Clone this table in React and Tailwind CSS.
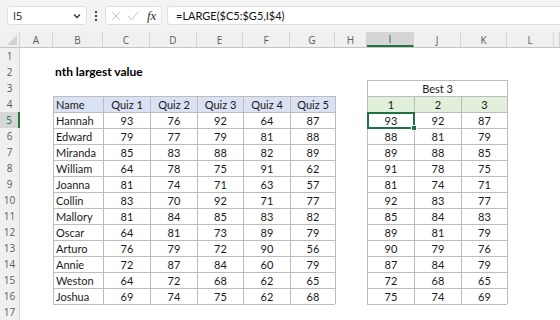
import React from "react";

const W = [20, 33, 50, 47, 47, 46, 47, 45, 32, 47, 47, 46, 47, 6];
const LETTERS = ["", "A", "B", "C", "D", "E", "F", "G", "H", "I", "J", "K", "L", ""];

const DATA = [
  ["Hannah", 93, 76, 92, 64, 87, 93, 92, 87],
  ["Edward", 79, 77, 79, 81, 88, 88, 81, 79],
  ["Miranda", 85, 83, 88, 82, 89, 89, 88, 85],
  ["William", 64, 78, 75, 91, 62, 91, 78, 75],
  ["Joanna", 81, 74, 71, 63, 57, 81, 74, 71],
  ["Collin", 83, 70, 92, 71, 77, 92, 83, 77],
  ["Mallory", 81, 84, 85, 83, 82, 85, 84, 83],
  ["Oscar", 64, 81, 73, 89, 79, 89, 81, 79],
  ["Arturo", 76, 79, 72, 90, 56, 90, 79, 76],
  ["Annie", 72, 87, 84, 60, 79, 87, 84, 79],
  ["Weston", 64, 72, 68, 62, 65, 72, 68, 65],
  ["Joshua", 69, 74, 75, 62, 68, 75, 74, 69],
];

function cellContent(row, col) {
  if (row === 2 && col === 2) return { text: "nth largest value", bold: true, left: true, overflow: true };
  if (row === 4) {
    if (col === 2) return { text: "Name", left: true, fill: "blue" };
    if (col >= 3 && col <= 7) return { text: "Quiz " + (col - 2), fill: "blue" };
    if (col >= 9 && col <= 11) return { text: String(col - 8), fill: "green" };
  }
  if (row >= 5 && row <= 16) {
    const d = DATA[row - 5];
    if (col === 2) return { text: d[0], left: true };
    if (col >= 3 && col <= 7) return { text: String(d[col - 2]) };
    if (col >= 9 && col <= 11) return { text: String(d[col - 3]) };
  }
  return null;
}

function inT1(row, col) {
  return row >= 4 && row <= 16 && col >= 2 && col <= 7;
}
function inT2(row, col) {
  return row >= 4 && row <= 16 && col >= 9 && col <= 11;
}

function Cell({ row, col }) {
  const c = cellContent(row, col);
  const inTable = inT1(row, col) || inT2(row, col);
  const topB =
    inTable ||
    (row === 17 && ((col >= 2 && col <= 7) || (col >= 9 && col <= 11)));
  const leftB =
    inTable || (row >= 4 && row <= 16 && (col === 8 || col === 12));
  const active = row === 5 && col === 9;
  let bg = "bg-white";
  if (c && c.fill === "blue") bg = "bg-[#d9e1f2]";
  if (c && c.fill === "green") bg = "bg-[#e2efda]";
  return (
    <div
      className={`relative h-[16px] shrink-0 flex items-center text-[11px] leading-none text-[#1a1a1a] ${bg} ${
        topB ? "border-t border-[#bdbdbd]" : ""
      } ${leftB ? "border-l border-l-[#bdbdbd]" : ""} ${
        c && c.left ? "justify-start pl-[2px]" : "justify-center"
      } ${(c && c.overflow) || active ? "overflow-visible whitespace-nowrap z-10" : "overflow-hidden"}`}
      style={{ width: W[col] }}
    >
      {c && (
        <span className={`${c.bold ? "font-bold text-[12px] text-black" : ""} whitespace-nowrap`}>
          {c.text}
        </span>
      )}
      {active && (
        <>
          <div className="absolute left-[-1px] top-[-1px] w-[48px] h-[17px] border-2 border-[#217346] pointer-events-none" />
          <div className="absolute left-[43px] top-[12px] w-[6px] h-[6px] bg-[#217346] border border-white" />
        </>
      )}
    </div>
  );
}

function Row({ row }) {
  const sel = row === 5;
  if (row === 3) {
    return (
      <div className="flex h-[16px]">
        <RowHeader row={row} sel={false} />
        {[1, 2, 3, 4, 5, 6, 7, 8].map((c) => (
          <div key={c} className="h-[16px] shrink-0 bg-white" style={{ width: W[c] }} />
        ))}
        <div className="h-[16px] w-[140px] shrink-0 bg-white border-t border-l border-[#bdbdbd] flex items-center justify-center text-[11px] leading-none text-[#1a1a1a]">
          Best 3
        </div>
        <div className="h-[16px] w-[47px] shrink-0 bg-white border-l border-[#bdbdbd]" />
        <div className="h-[16px] w-[6px] shrink-0 bg-white" />
      </div>
    );
  }
  return (
    <div className="flex h-[16px]">
      <RowHeader row={row} sel={sel} />
      {[1, 2, 3, 4, 5, 6, 7, 8, 9, 10, 11, 12, 13].map((c) => (
        <Cell key={c} row={row} col={c} />
      ))}
    </div>
  );
}

function RowHeader({ row, sel }) {
  return (
    <div
      className={`w-[20px] h-[16px] shrink-0 flex items-center justify-center text-[10px] leading-none font-['Open_Sans',sans-serif] ${
        sel
          ? "bg-[#d6d6d6] text-[#217346] border-r-2 border-[#217346]"
          : "bg-[#f0f0f0] text-[#5c5c5c] border-r border-[#d4d4d4]"
      }`}
    >
      {row}
    </div>
  );
}

function ColHeaders() {
  return (
    <div className="flex h-[16px] bg-[#f0f0f0] border-b border-[#c4c4c4] font-['Open_Sans',sans-serif]">
      <div className="relative w-[20px] h-full shrink-0 border-r border-[#d4d4d4]">
        <svg className="absolute right-[2px] bottom-[2px]" width="10" height="10" viewBox="0 0 10 10">
          <polygon points="10,0 10,10 0,10" fill="#d3d3d3" />
        </svg>
      </div>
      {LETTERS.slice(1).map((l, i) => {
        const col = i + 1;
        const sel = l === "I";
        return (
          <div
            key={col}
            className={`h-full shrink-0 flex items-center justify-center text-[10px] leading-none ${
              sel
                ? "bg-[#d6d6d6] text-[#217346] border-b-2 border-b-[#217346] border-r border-r-[#d4d4d4]"
                : "text-[#5c5c5c] border-r border-[#d4d4d4]"
            }`}
            style={{ width: W[col] }}
          >
            {l}
          </div>
        );
      })}
    </div>
  );
}

function Toolbar() {
  return (
    <div className="h-[32px] bg-[#f3f3f3] flex items-start pt-[6px] pl-[7px] font-['Open_Sans',sans-serif]">
      <div className="w-[80px] h-[19px] bg-white border border-[#e0e0e0] rounded-[3px] flex items-center justify-between pl-[5px] pr-[5px] text-[11px] text-[#222]">
        <span className="leading-none">I5</span>
        <svg width="8" height="6" viewBox="0 0 8 6">
          <path d="M1 1.5 L4 4.5 L7 1.5" fill="none" stroke="#333" strokeWidth="1.3" />
        </svg>
      </div>
      <div className="w-[18px] h-[19px] flex flex-col items-center justify-center gap-[2px]">
        <div className="w-[2px] h-[2px] bg-[#444]" />
        <div className="w-[2px] h-[2px] bg-[#444]" />
        <div className="w-[2px] h-[2px] bg-[#444]" />
      </div>
      <div className="w-[57px] h-[19px] bg-white border border-[#e0e0e0] rounded-[3px] flex items-center pl-[5px] gap-[6px]">
        <svg width="10" height="10" viewBox="0 0 10 10">
          <path d="M1 1 L9 9 M9 1 L1 9" stroke="#c4c4c4" strokeWidth="1" fill="none" />
        </svg>
        <svg width="12" height="10" viewBox="0 0 12 10">
          <path d="M1 5 L4.5 9 L11 1" stroke="#c4c4c4" strokeWidth="1" fill="none" />
        </svg>
        <span className="font-['Liberation_Serif',serif] italic text-[13px] leading-none text-[#333] ml-[2px]">
          fx
        </span>
      </div>
      <div className="flex-1 ml-[5px] h-[19px] bg-white border border-[#e0e0e0] border-r-0 rounded-l-[3px] flex items-center pl-[8px] text-[11px] text-[#111] font-['Lato',sans-serif]">
        <span className="leading-none">=LARGE($C5:$G5,I$4)</span>
      </div>
    </div>
  );
}

export default function App() {
  const rows = Array.from({ length: 17 }, (_, i) => i + 1);
  return (
    <div className="w-[560px] h-[320px] overflow-hidden bg-white font-['Lato',sans-serif]">
      <Toolbar />
      <ColHeaders />
      {rows.map((r) => (
        <Row key={r} row={r} />
      ))}
    </div>
  );
}
